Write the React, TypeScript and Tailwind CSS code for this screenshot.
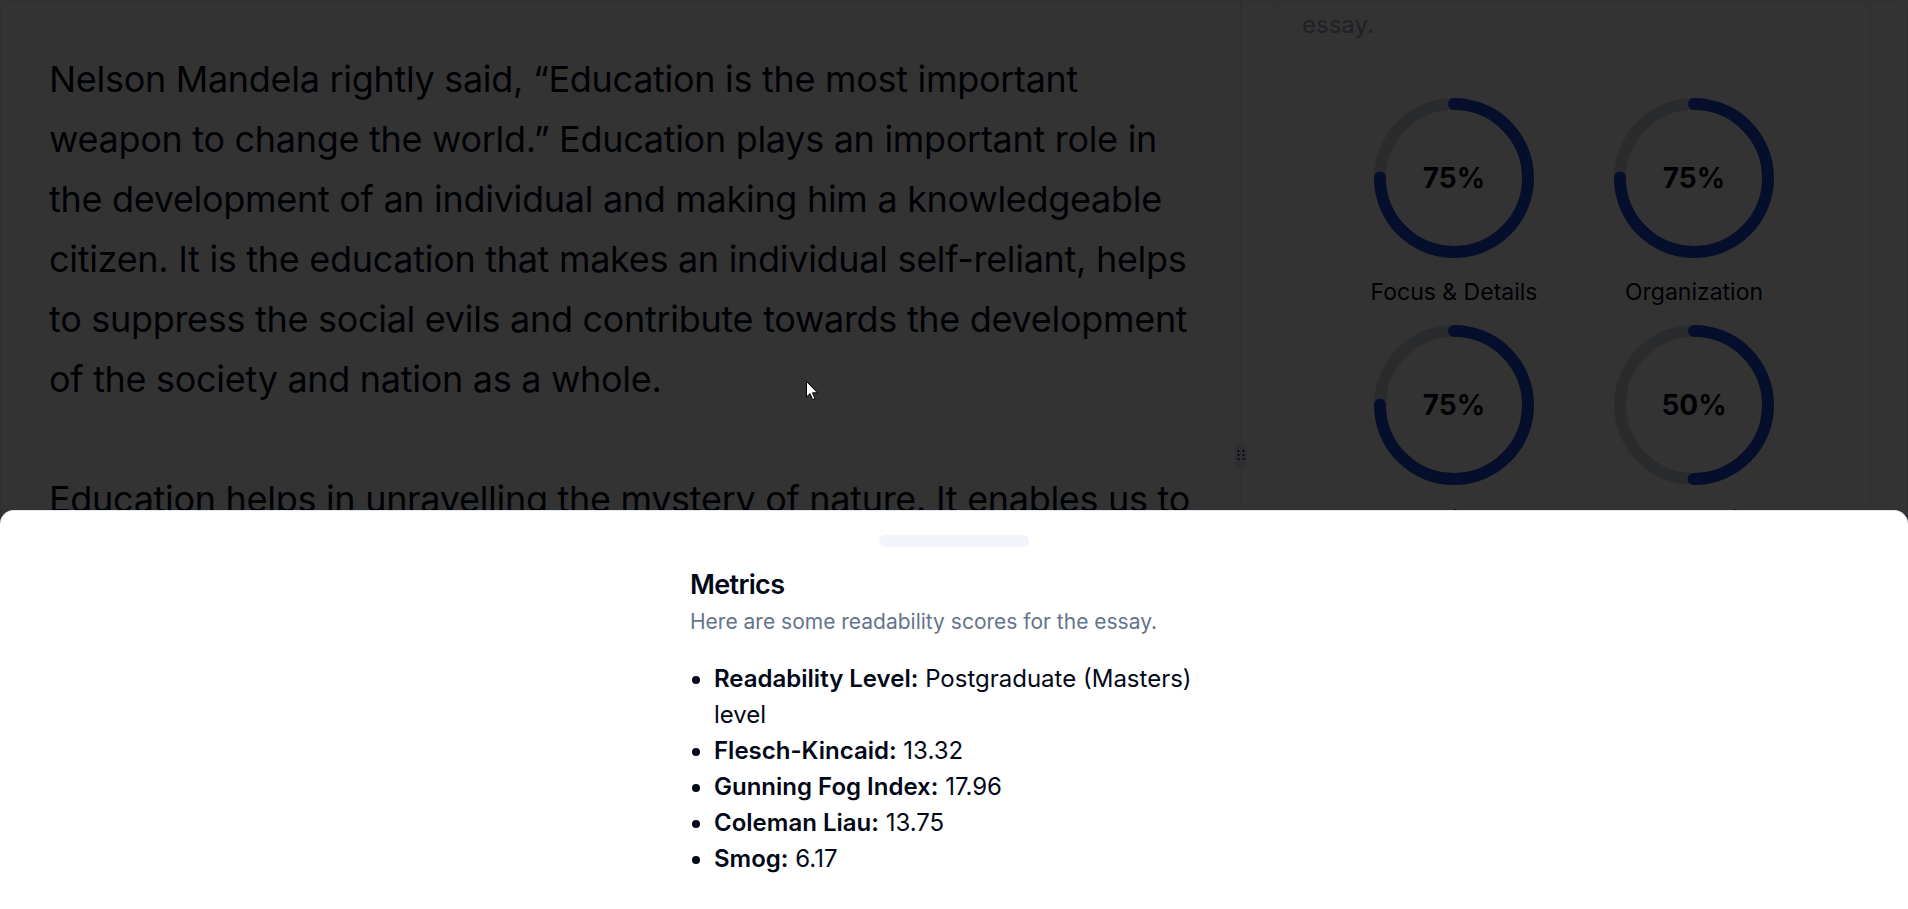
import React from "react";

const FONT = "font-['Inter','Liberation_Sans',sans-serif]";

function Ring({ value, label }: { value: number; label: string }) {
  const r = 74;
  const c = 2 * Math.PI * r;
  const dash = (value / 100) * c;
  return (
    <div className="flex flex-col items-center gap-[16px]">
      <div className="relative h-[160px] w-[160px]">
        <svg width="160" height="160" viewBox="0 0 160 160" className="-rotate-90">
          <circle cx="80" cy="80" r={r} fill="none" stroke="#cbd5e1" strokeWidth="12" />
          <circle
            cx="80"
            cy="80"
            r={r}
            fill="none"
            stroke="#1d4ed8"
            strokeWidth="12"
            strokeLinecap="round"
            strokeDasharray={`${dash} ${c}`}
          />
        </svg>
        <div className="absolute inset-0 flex items-center justify-center text-[28px] font-bold text-[#020817]">
          {value}%
        </div>
      </div>
      <div className="text-[23px] leading-[36px] text-[#020817]">{label}</div>
    </div>
  );
}

const para1 = [
  "Nelson Mandela rightly said, “Education is the most important",
  "weapon to change the world.” Education plays an important role in",
  "the development of an individual and making him a knowledgeable",
  "citizen. It is the education that makes an individual self-reliant, helps",
  "to suppress the social evils and contribute towards the development",
  "of the society and nation as a whole.",
];

const para2 = [
  "Education helps in unravelling the mystery of nature. It enables us to",
  "understand the world around us and to think critically about the",
  "problems we face in our daily lives.",
];

export default function App() {
  return (
    <div className={`relative h-[909px] w-full overflow-hidden bg-white ${FONT}`}>
      {/* Page */}
      <div className="flex h-[909px] rounded-[12px] border border-[#e2e8f0]">
        {/* Left panel: essay */}
        <div className="w-[1239px] shrink-0 overflow-hidden p-[48px] text-[36px] leading-[60px] tracking-[-0.3px] text-[#020817]">
          <p>
            {para1.map((l) => (
              <span key={l} className="block whitespace-nowrap">
                {l}
              </span>
            ))}
          </p>
          <p className="mt-[60px]">
            {para2.map((l) => (
              <span key={l} className="block whitespace-nowrap">
                {l}
              </span>
            ))}
          </p>
        </div>

        {/* Resize handle */}
        <div className="relative w-px shrink-0 bg-[#e2e8f0]">
          <div className="absolute left-1/2 top-1/2 flex h-[24px] w-[12px] -translate-x-1/2 -translate-y-1/2 items-center justify-center rounded-[3px] border border-[#e2e8f0] bg-[#e2e8f0]">
            <svg width="8" height="12" viewBox="0 0 8 12">
              <circle cx="1.5" cy="2" r="1" fill="#020817" />
              <circle cx="6.5" cy="2" r="1" fill="#020817" />
              <circle cx="1.5" cy="6" r="1" fill="#020817" />
              <circle cx="6.5" cy="6" r="1" fill="#020817" />
              <circle cx="1.5" cy="10" r="1" fill="#020817" />
              <circle cx="6.5" cy="10" r="1" fill="#020817" />
            </svg>
          </div>
        </div>

        {/* Right panel: scores */}
        <div className="min-w-0 flex-1 overflow-hidden px-[36px]">
          <div className="-mt-[55px] rounded-[12px] border border-[#e2e8f0] px-[24px] pt-[24px] pb-[24px]">
            <p className="text-[24px] leading-[36px] text-[#94a3b8]">
              Here are the trait scores for the
              <br />
              essay.
            </p>
            <div className="mt-[26px] h-px bg-[#e2e8f0]" />
            <div className="mx-auto mt-[28px] grid w-[480px] grid-cols-2 gap-y-[15px]">
              <Ring value={75} label="Focus & Details" />
              <Ring value={75} label="Organization" />
              <Ring value={75} label="Voice" />
              <Ring value={50} label="Word Choice" />
              <Ring value={75} label="Sentence Fluency" />
              <Ring value={75} label="Conventions" />
            </div>
          </div>
        </div>
      </div>

      {/* Overlay */}
      <div className="absolute inset-0 z-20 bg-black/80" />

      {/* Cursor */}
      <svg
        className="absolute left-[806px] top-[381px] z-30"
        width="13"
        height="20"
        viewBox="0 0 13 20"
      >
        <path
          d="M0.5 0.5 L0.5 16 L4 12.6 L6.6 18.6 L9 17.6 L6.5 11.8 L11.5 11.8 Z"
          fill="#ffffff"
          stroke="#000000"
          strokeWidth="1"
          strokeLinejoin="round"
        />
      </svg>

      {/* Drawer */}
      <div className="absolute inset-x-0 bottom-0 z-30 rounded-t-[14px] border-t border-[#e2e8f0] bg-white pb-[32px]">
        <div className="mx-auto mt-[24px] h-[12px] w-[150px] rounded-full bg-[#f1f5f9]" />
        <div className="mx-auto w-[576px]">
          <div className="flex flex-col gap-[9px] p-[24px]">
            <h2 className="text-[27px] font-semibold leading-none tracking-tight text-[#020817]">
              Metrics
            </h2>
            <p className="text-[21px] leading-[30px] text-[#64748b]">
              Here are some readability scores for the essay.
            </p>
          </div>
          <div className="px-[24px]">
            <ul className="list-disc pl-[24px] text-[24px] leading-[36px] text-[#020817]">
              <li>
                <span className="font-semibold">Readability Level:</span> Postgraduate (Masters) level
              </li>
              <li>
                <span className="font-semibold">Flesch-Kincaid:</span> 13.32
              </li>
              <li>
                <span className="font-semibold">Gunning Fog Index:</span> 17.96
              </li>
              <li>
                <span className="font-semibold">Coleman Liau:</span> 13.75
              </li>
              <li>
                <span className="font-semibold">Smog:</span> 6.17
              </li>
            </ul>
          </div>
        </div>
      </div>
    </div>
  );
}
